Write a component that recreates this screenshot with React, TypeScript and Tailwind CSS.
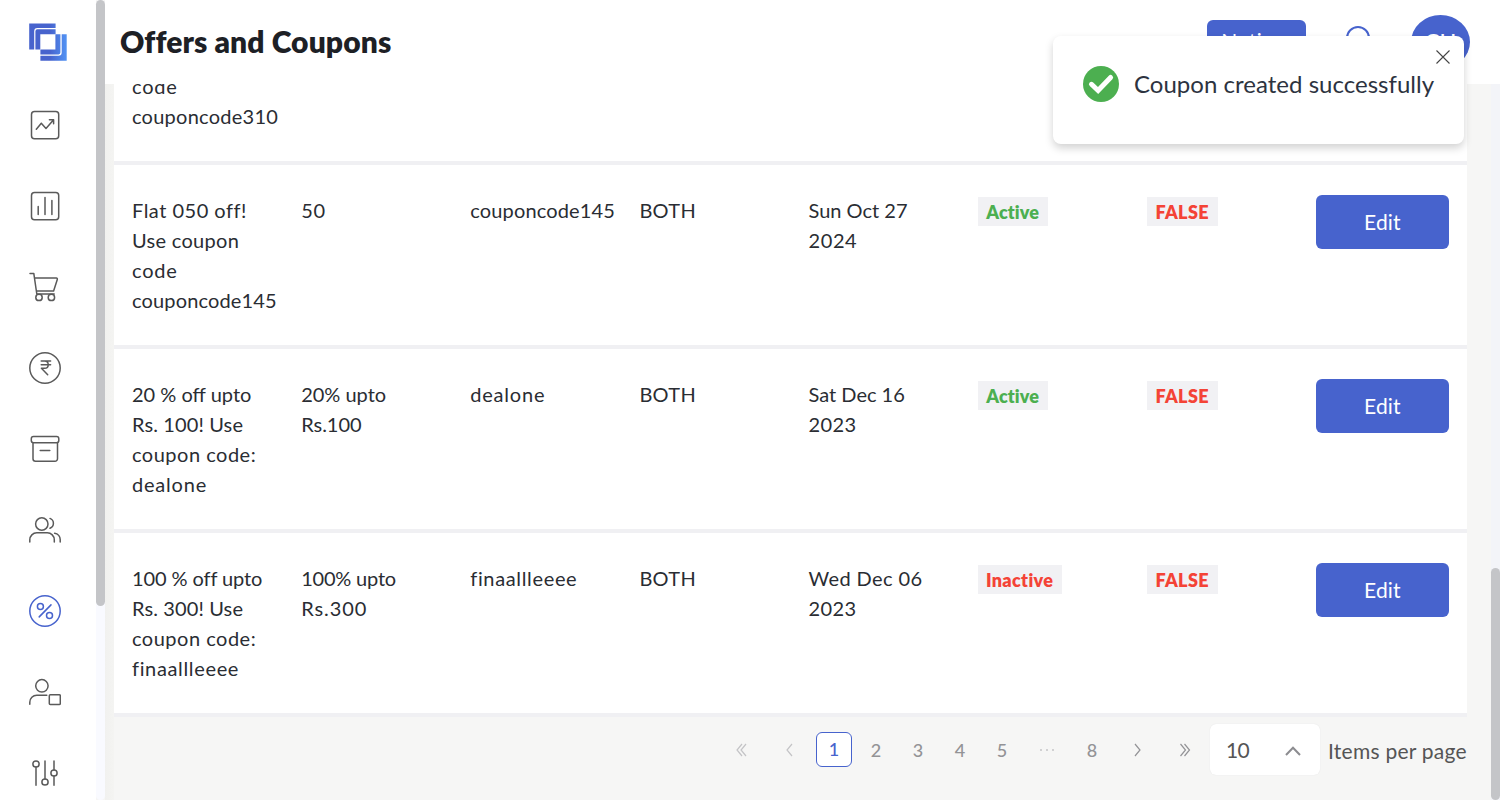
import type { ReactNode } from "react";

type Line = [text: string, tracking?: string];

interface Coupon {
  description: Line[];
  discount: Line[];
  code: Line[];
  validFor: Line[];
  expiry: Line[];
  active: boolean;
}

const coupons: Coupon[] = [
  {
    description: [["Flat 050 off!", "tracking-[0.5px]"], ["Use coupon", "tracking-[0.3px]"], ["code", "tracking-[0.8px]"], ["couponcode145", "tracking-[0.15px]"]],
    discount: [["50", "tracking-[0.8px]"]],
    code: [["couponcode145", "tracking-[0.15px]"]],
    validFor: [["BOTH", "tracking-[0.3px]"]],
    expiry: [["Sun Oct 27", "tracking-[0px]"], ["2024", "tracking-[0.6px]"]],
    active: true,
  },
  {
    description: [["20 % off upto"], ["Rs. 100! Use", "tracking-[0.12px]"], ["coupon code:", "tracking-[0.5px]"], ["dealone", "tracking-[0.8px]"]],
    discount: [["20% upto"], ["Rs.100"]],
    code: [["dealone", "tracking-[0.8px]"]],
    validFor: [["BOTH", "tracking-[0.3px]"]],
    expiry: [["Sat Dec 16"], ["2023", "tracking-[0.4px]"]],
    active: true,
  },
  {
    description: [["100 % off upto", "tracking-[-0.1px]"], ["Rs. 300! Use", "tracking-[0.12px]"], ["coupon code:", "tracking-[0.5px]"], ["finaallleeee", "tracking-[0.65px]"]],
    discount: [["100% upto", "tracking-[-0.2px]"], ["Rs.300", "tracking-[0.95px]"]],
    code: [["finaallleeee", "tracking-[0.65px]"]],
    validFor: [["BOTH", "tracking-[0.3px]"]],
    expiry: [["Wed Dec 06", "tracking-[0.4px]"], ["2023", "tracking-[0.4px]"]],
    active: false,
  },
];

function Icon({ children, active }: { children: ReactNode; active?: boolean }) {
  return (
    <svg
      viewBox="0 0 32 32"
      className={active ? "size-8 shrink-0 text-[#4763cd]" : "size-8 shrink-0 text-[#5a5a5a]"}
      fill="none"
      stroke="currentColor"
      strokeWidth="1.5"
      strokeLinecap="round"
      strokeLinejoin="round"
    >
      {children}
    </svg>
  );
}

function Logo() {
  return (
    <svg viewBox="0 0 38 38" className="size-[38px] shrink-0">
      <defs>
        <linearGradient id="logo" gradientUnits="userSpaceOnUse" x1="0" y1="0" x2="38" y2="0">
          <stop offset="0.55" stopColor="#4763cd" />
          <stop offset="1" stopColor="#5294f5" />
        </linearGradient>
      </defs>
      <g fill="url(#logo)">
        <path d="M0.2 0.4H26.6V5H8.4Q5.2 5 5.2 8.2V26.6H0.2Z" />
        <path d="M6.4 8.2Q6.4 6.3 8.4 6.3H26.6V11.2H11.3V26.6H6.4Z" />
        <path d="M26.4 11.3H31.4V29.6Q31.4 31.4 29.6 31.4H11.4V26.6H26.4Z" />
        <path d="M32.7 11.3H37.7V37.8H11.4V32.8H29.6Q32.7 32.8 32.7 29.6Z" />
      </g>
    </svg>
  );
}

function Sidebar() {
  return (
    <nav className="flex w-24 shrink-0 flex-col gap-[49px] overflow-hidden bg-white pt-[23px] pl-[29px]">
      <div className="-mb-px flex">
        <Logo />
      </div>
      <Icon>
        <rect x="2.5" y="2.5" width="27.2" height="27.2" rx="3" />
        <path d="M7.3 20.2l5-6 4.7 5.300 7.600-8.800M20.400 10.700h4.200v4" />
      </Icon>
      <Icon>
        <rect x="2.5" y="2.5" width="27.2" height="27.2" rx="3" />
        <path d="M9.2 16.4V24.5M16 7.4V24.5M22.9 10.4V24.5" />
      </Icon>
      <Icon>
        <path d="M1 2.4h3.800L7.800 23H25.2M5.6 7.1H27.4a1 1 0 0 1 .9 1.3L24.6 20H7.5" />
        <circle cx="10" cy="26.4" r="3.2" />
        <circle cx="22.4" cy="26.4" r="3.2" />
      </Icon>
      <Icon>
        <circle cx="16" cy="16" r="15.2" />
        <path d="M12.2 9.1H21.6M12.2 12.7H21.6M12.2 9.1h3.400q3.600 0 3.600 3.600t-3.600 3.600h-3.200L18.7 22.800" />
      </Icon>
      <Icon>
        <rect x="2.3" y="3.6" width="27.5" height="6.2" rx="2.2" />
        <path d="M4 9.8V25.7a2.5 2.5 0 0 0 2.5 2.5H26a2.5 2.5 0 0 0 2.5-2.5V9.8M11.2 17.4H20.8" />
      </Icon>
      <Icon>
        <circle cx="12.8" cy="10" r="6.2" />
        <path d="M.8 28v-2.2a7 7 0 0 1 7-7H18.3a7 7 0 0 1 7 7V28M21 4.4a5.3 5.3 0 0 1 0 9.9M25.6 19.2a6.3 6.3 0 0 1 5.6 6.6V28" />
      </Icon>
      <Icon active>
        <circle cx="16" cy="16" r="15.2" />
        <circle cx="11.4" cy="11.5" r="3" />
        <circle cx="20.5" cy="20.5" r="3" />
        <path d="M22 9.9L10.2 21.9" />
      </Icon>
      <Icon>
        <circle cx="12.9" cy="9.8" r="6.2" />
        <path d="M.8 28.2v-2a7 7 0 0 1 7-7H17.8" />
        <rect x="20.3" y="18.7" width="11" height="9.8" rx="1" />
      </Icon>
      <Icon>
        <circle cx="7" cy="7" r="3.1" />
        <circle cx="16" cy="25" r="3.1" />
        <circle cx="25" cy="16" r="3.1" />
        <path d="M7 10.3V28.2M16 3.9V21.7M25 3.9V12.7M25 19.3V28.2" />
      </Icon>
    </nav>
  );
}

function Lines({ lines }: { lines: Line[] }) {
  return (
    <div className="px-[18px] whitespace-nowrap">
      {lines.map(([text, tracking]) => (
        <div key={text} className={tracking}>
          {text}
        </div>
      ))}
    </div>
  );
}

function Badge({ tone, children }: { tone: "active" | "inactive" | "false"; children: string }) {
  const styles = {
    active: "w-[70px] text-[#4caf50] tracking-[0.1px]",
    inactive: "w-[84px] text-[#f44336] tracking-[0.35px]",
    false: "w-[71px] text-[#f44336] tracking-[0.4px]",
  };
  return (
    <div className="px-[18px] pt-0.5">
      <div className={"flex h-[29px] items-center justify-center bg-[#f1f1f4] text-lg font-extrabold " + styles[tone]}>{children}</div>
    </div>
  );
}

function CouponRow({ coupon }: { coupon: Coupon }) {
  return (
    <div className="grid h-[184px] shrink-0 grid-cols-8 border-b-4 border-[#f0f0f3] bg-white pt-[30px]">
      <Lines lines={coupon.description} />
      <Lines lines={coupon.discount} />
      <Lines lines={coupon.code} />
      <Lines lines={coupon.validFor} />
      <Lines lines={coupon.expiry} />
      <Badge tone={coupon.active ? "active" : "inactive"}>{coupon.active ? "Active" : "Inactive"}</Badge>
      <Badge tone="false">FALSE</Badge>
      <div className="px-[18px]">
        <button className="h-[54px] w-full rounded-md bg-[#4763cd] text-[21px] tracking-[0.2px] text-white">Edit</button>
      </div>
    </div>
  );
}

function Arrow({ d }: { d: string }) {
  return (
    <svg viewBox="0 0 12 14" className="h-3.5 w-3" fill="none" stroke="currentColor" strokeWidth="1.2">
      <path d={d} />
    </svg>
  );
}

function Pagination() {
  return (
    <div className="flex h-[83px] shrink-0 items-start justify-end pt-[7px] text-lg font-medium text-[#939396]">
      <div className="mr-px flex h-[51px] items-center">
        <span className="flex w-12 justify-center text-[#c4c4c6]">
          <Arrow d="M7 1L2 7l5 6M11 1L6 7l5 6" />
        </span>
        <span className="flex w-12 justify-center text-[#c4c4c6]">
          <Arrow d="M9 1L4 7l5 6" />
        </span>
        <span className="mx-[3px] flex h-[35px] w-9 items-center justify-center rounded-md border border-[#4763cd] bg-white pb-px text-[#4763cd]">1</span>
        {["2", "3", "4", "5"].map((page) => (
          <span key={page} className="w-[42px] text-center">
            {page}
          </span>
        ))}
        <span className="flex w-12 justify-center gap-1 text-[#c4c4c6]">
          <i className="size-[2px] rounded-full bg-current" />
          <i className="size-[2px] rounded-full bg-current" />
          <i className="size-[2px] rounded-full bg-current" />
        </span>
        <span className="w-[42px] text-center">8</span>
        <span className="flex w-12 justify-center">
          <Arrow d="M4 1L9 7l-5 6" />
        </span>
        <span className="flex w-12 justify-center">
          <Arrow d="M1.5 1l5 6-5 6M5.5 1l5 6-5 6" />
        </span>
      </div>
      <div className="flex h-[51px] w-[110px] items-center justify-between rounded-md bg-white pt-0.5 pr-[19px] pl-4 text-[21px] font-normal tracking-[-0.8px] text-[#555] shadow-[0_0_1px_#ddd]">
        10
        <svg viewBox="0 0 16 10" className="h-2.5 w-4" fill="none" stroke="#8c8c90" strokeWidth="2">
          <path d="M1 9l7-7.3L15 9" />
        </svg>
      </div>
      <span className="ml-2 h-[53px] w-[139px] text-[21px] leading-[53px] font-normal tracking-[0.25px] whitespace-nowrap text-[#555]">Items per page</span>
    </div>
  );
}

function Header() {
  return (
    <header className="flex h-[84px] shrink-0 items-center bg-white pr-[30px] pl-[15px]">
      <h1 className="flex-1 pb-0.5 text-[30px] font-extrabold tracking-[0.1px] text-[#1d2025]">Offers and Coupons</h1>
      <button className="h-11 w-[99px] rounded-md bg-[#4763cd] pb-0.5 text-[21px] text-white">Notices</button>
      <svg viewBox="0 0 24 32" className="ml-10 h-8 w-6" fill="none" stroke="#4763cd" strokeWidth="2">
        <path d="M1 23V12a11 11 0 0 1 22 0v11zM8 27a4 4 0 0 0 8 0" />
      </svg>
      <div className="ml-[41px] flex h-[54px] w-[59px] items-center justify-center rounded-[50%] bg-[#4763cd] pb-0.5 text-[22px] font-medium text-white">CH</div>
    </header>
  );
}

function Toast() {
  return (
    <div className="absolute top-9 right-9 flex h-[108px] w-[411px] rounded-lg bg-white pt-[30px] pl-[30px] shadow-[0_4px_8px_rgba(0,0,0,0.18)]">
      <svg viewBox="0 0 36 36" className="size-9" fill="none">
        <circle cx="18" cy="18" r="18" fill="#4caf50" />
        <path d="M8.500 18.300l6.600 6.200L27.600 11.500" stroke="#fff" strokeWidth="5" strokeLinecap="round" />
      </svg>
      <span className="ml-[15px] text-2xl leading-9 tracking-[0.02px] whitespace-nowrap text-[#2d3340]">Coupon created successfully</span>
      <svg viewBox="0 0 14 14" className="absolute top-3.5 right-3.5 size-3.5" stroke="#444" strokeWidth="1.1">
        <path d="M.5.5l13 13M13.5.5l-13 13" />
      </svg>
    </div>
  );
}

export default function App() {
  return (
    <div className="relative flex h-[800px] w-[1500px] overflow-hidden bg-[#f6f6f5] font-['Lato',sans-serif] text-xl leading-[30px] text-[#2a2d33]">
      <Sidebar />
      <div className="w-[9px] shrink-0 rounded-full bg-[#f9faff]">
        <div className="h-[606px] rounded-full bg-[#c4c5c8]" />
      </div>
      <main className="flex min-w-0 flex-1 flex-col">
        <Header />
        <div className="flex min-h-0 flex-1">
          <div className="w-[9px] bg-linear-to-r from-[#f1f1ef] to-[#f4f4f2]" />
          <section className="flex min-w-0 flex-1 flex-col justify-end overflow-hidden pr-6">
            <div className="flex h-[94px] shrink-0 flex-col border-b-4 border-[#f0f0f3] bg-white">
              <Lines lines={[["code", "tracking-[0.8px]"], ["couponcode310", "tracking-[0.25px]"]]} />
            </div>
            {coupons.map((coupon) => (
              <CouponRow key={coupon.expiry[0][0]} coupon={coupon} />
            ))}
            <Pagination />
          </section>
          <div className="flex w-[9px] items-end bg-[#f3f4f8]">
            <div className="h-[232px] w-full rounded-full bg-[#c4c5c8]" />
          </div>
        </div>
      </main>
      <Toast />
    </div>
  );
}
